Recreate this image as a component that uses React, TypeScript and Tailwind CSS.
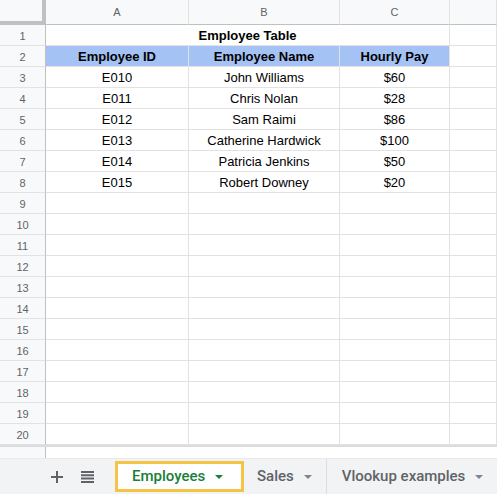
import React from "react";

const COLS = ["A", "B", "C", ""];

const DATA: [string, string, string][] = [
  ["E010", "John Williams", "$60"],
  ["E011", "Chris Nolan", "$28"],
  ["E012", "Sam Raimi", "$86"],
  ["E013", "Catherine Hardwick", "$100"],
  ["E014", "Patricia Jenkins", "$50"],
  ["E015", "Robert Downey", "$20"],
];

const GRID = "grid grid-cols-[46px_143px_151px_110px_1fr]";

const Caret = ({ className }: { className: string }) => (
  <svg width="8" height="4" viewBox="0 0 8 4" className={className} aria-hidden="true">
    <path d="M0 0h8L4 4z" fill="currentColor" />
  </svg>
);

const RowHead = ({ n }: { n: number }) => (
  <div className="h-[21px] pt-[2px] bg-[#f8f9fa] border-r border-b border-r-[#c0c0c0] border-b-[#e2e2e3] flex items-center justify-center text-[11px] text-[#5f6368]">
    {n}
  </div>
);

const Cell = ({ children, className = "" }: { children?: React.ReactNode; className?: string }) => (
  <div
    className={`h-[21px] pt-[2px] border-r border-b border-[#e2e2e3] flex items-center justify-center text-[13px] text-black whitespace-nowrap overflow-hidden ${className}`}
  >
    {children}
  </div>
);

export default function App() {
  const emptyRows = Array.from({ length: 12 }, (_, i) => i + 9);

  return (
    <div className="w-[497px] h-[494px] overflow-hidden flex flex-col bg-white font-['Liberation_Sans',Arial,sans-serif]">
      <div className="flex-1">
        {/* column headers */}
        <div className={`${GRID} h-[25px]`}>
          <div className="bg-[#f8f9fa] border-r-4 border-b-4 border-[#c0c0c0]" />
          {COLS.map((c, i) => (
            <div
              key={i}
              className="bg-[#f8f9fa] border-r border-b border-r-[#e2e2e3] border-b-[#c0c0c0] flex items-center justify-center text-[11px] text-[#5f6368]"
            >
              {c}
            </div>
          ))}
        </div>

        {/* row 1 */}
        <div className={GRID}>
          <RowHead n={1} />
          <Cell className="col-span-3 font-bold">Employee Table</Cell>
          <Cell />
        </div>

        {/* row 2 */}
        <div className={GRID}>
          <RowHead n={2} />
          <Cell className="bg-[#a4c2f4] border-[#98b6e8] font-bold">Employee ID</Cell>
          <Cell className="bg-[#a4c2f4] border-[#98b6e8] font-bold">Employee Name</Cell>
          <Cell className="bg-[#a4c2f4] border-[#98b6e8] font-bold">Hourly Pay</Cell>
          <Cell />
        </div>

        {DATA.map((r, i) => (
          <div key={r[0]} className={GRID}>
            <RowHead n={i + 3} />
            <Cell>{r[0]}</Cell>
            <Cell>{r[1]}</Cell>
            <Cell>{r[2]}</Cell>
            <Cell />
          </div>
        ))}

        {emptyRows.map((n) => (
          <div key={n} className={GRID}>
            <RowHead n={n} />
            <Cell />
            <Cell />
            <Cell />
            <Cell />
          </div>
        ))}

        <div className={`${GRID} h-[13px] border-t-2 border-[#dadce0]`}>
          <div className="bg-[#f8f9fa] border-r border-[#c0c0c0]" />
          <div className="col-span-4" />
        </div>
      </div>

      {/* sheet tabs */}
      <div className="h-[36px] bg-[#f1f3f4] border-t border-[#e8eaed] flex items-center font-['Roboto',Arial,sans-serif] text-[15px]">
        <div className="w-[51px]" />
        <svg width="12" height="12" viewBox="0 0 12 12" aria-hidden="true">
          <path d="M5 0h2v5h5v2H7v5H5V7H0V5h5z" fill="#5f6368" />
        </svg>
        <div className="w-[18px]" />
        <svg width="13" height="12" viewBox="0 0 13 12" aria-hidden="true">
          <path d="M0 0h13v2H0zM0 3.3h13v2H0zM0 6.6h13v2H0zM0 10h13v2H0z" fill="#5f6368" />
        </svg>
        <div className="ml-[21px] h-[31px] w-[129px] border-[3px] border-[#f6c444] bg-white flex items-center pl-[14px] gap-[10px] text-[#188038] font-medium">
          <span>Employees</span>
          <Caret className="text-[#188038]" />
        </div>
        <div className="flex items-center h-full pl-[13px] pr-[14px] gap-[10px] text-[#5f6368] font-medium border-r border-[#dadce0]">
          <span>Sales</span>
          <Caret className="text-[#80868b]" />
        </div>
        <div className="flex items-center h-full pl-[15px] gap-[10px] text-[#5f6368] font-medium">
          <span>Vlookup examples</span>
          <Caret className="text-[#80868b]" />
        </div>
      </div>
    </div>
  );
}
